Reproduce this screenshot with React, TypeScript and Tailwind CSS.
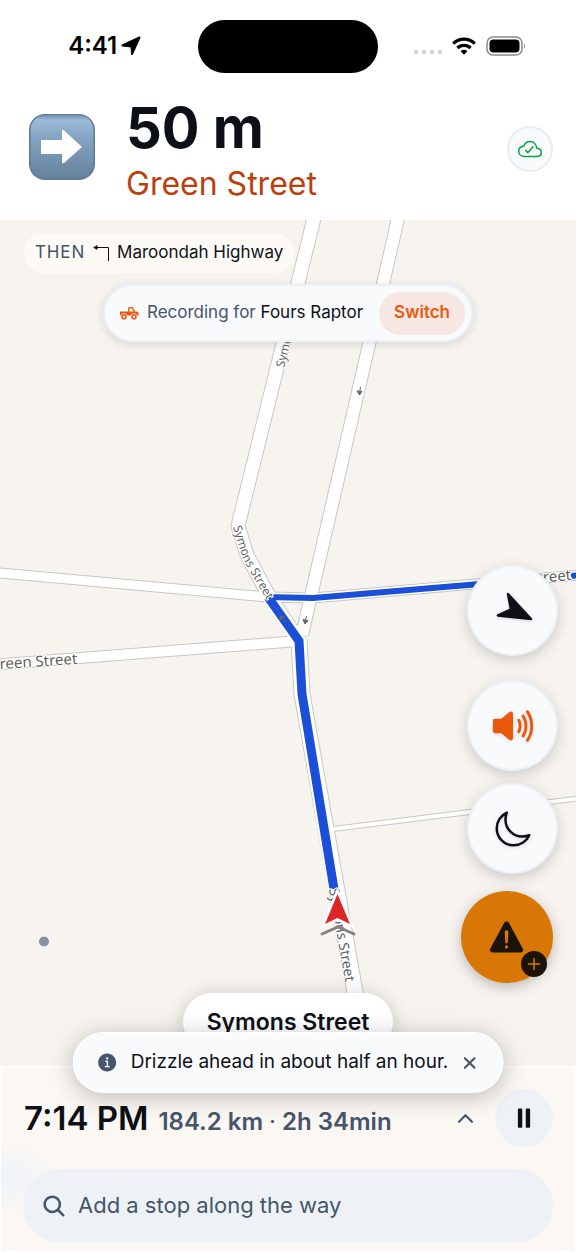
import React from "react";
import {
  IoChevronUp,
  IoClose,
  IoCloudDoneOutline,
  IoInformationCircle,
  IoMoonOutline,
  IoPause,
  IoSearch,
  IoVolumeHigh,
  IoWarning,
} from "react-icons/io5";

interface Road {
  d: string;
  width: number;
}

const roads: Road[] = [
  { d: "M316 210 L238 526 L247 555 L270 598 L300 642", width: 15 },
  { d: "M400 210 L302 635", width: 14 },
  { d: "M-10 572 L268 597 L313 598 L590 574", width: 11 },
  { d: "M-10 665 L299 641", width: 12 },
  { d: "M333 829 L590 797", width: 6 },
  { d: "M299 640 L302 694 L355 992 L372 1080", width: 17 },
];

const MapCanvas = () => (
  <svg
    className="absolute inset-0 h-full w-full"
    viewBox="0 220 576 846"
    preserveAspectRatio="xMidYMid slice"
    aria-hidden="true"
  >
    <defs>
      <path id="symons-top" d="M284 368 L320 222" />
      <path id="symons-mid" d="M233 527 L243 559 L290 640" />
      <path id="symons-low" d="M329 889 L355 1037" />
      <path id="green-left" d="M-11 670 L160 658" />
      <path id="green-right" d="M483 588 L690 569" />
    </defs>
    <rect x="-400" y="0" width="1400" height="1400" fill="#f7f4f0" />
    <g fill="none" strokeLinejoin="round">
      {roads.map((road) => (
        <path key={road.d} d={road.d} stroke="#c9c7c4" strokeWidth={road.width} />
      ))}
      {roads.map((road) => (
        <path key={road.d} d={road.d} stroke="#ffffff" strokeWidth={road.width - 2} />
      ))}
    </g>
    <g fill="none" stroke="#1b4fd8">
      <path d="M335 889 L302 694 L299 641 L270 599" stroke="#ffffff" strokeWidth="14" />
      <path d="M334 889 L302 694 L299 641 L268 597" strokeWidth="9" />
      <path d="M266 597 L313 598 L480 584" strokeWidth="6" />
      <path d="M571 576 L580 575" strokeWidth="6" />
    </g>
    <g stroke="#666666" strokeWidth="1" fill="#666666">
      <path d="M360.500 387 L359.500 394 M357 391 L359.500 395 L362 391.500 Z" />
      <path d="M306.500 616 L305 623 M303 619.500 L305 624 L308 620.500 Z" />
      <path d="M286 622 L281 617 M280 620 L280.500 616 L284 616.500 Z" />
    </g>
    <g
      fill="#5f5f5f"
      stroke="#ffffff"
      strokeWidth="2"
      paintOrder="stroke"
      className="font-['Noto_Sans',sans-serif]"
    >
      <text className="text-[12px]">
        <textPath href="#symons-top">Symons Street</textPath>
      </text>
      <text className="text-[12px]">
        <textPath href="#symons-mid">Symons Street</textPath>
      </text>
      <text className="text-[14px]">
        <textPath href="#symons-low">Symons Street</textPath>
      </text>
      <text className="text-[15px]">
        <textPath href="#green-left">Green Street</textPath>
      </text>
      <text className="text-[15px]">
        <textPath href="#green-right">Green Street</textPath>
      </text>
    </g>
    <path d="M322 934 L338 927 L354 934" fill="none" stroke="#85827f" strokeWidth="3" strokeLinecap="round" />
    <path
      d="M337.500 894 L350 924 L337.500 918 L325 924 Z"
      fill="#dc2626"
      stroke="#ffffff"
      strokeWidth="5"
      paintOrder="stroke"
    />
    <circle cx="44" cy="941.500" r="5.500" fill="#8494a3" stroke="#ffffff" strokeWidth="1" />
  </svg>
);

const StatusBar = () => (
  <div className="grid h-[92px] grid-cols-3 items-center px-4 text-black">
    <div className="flex items-center justify-center gap-1 pr-1">
      <span className="text-2xl font-semibold">4:41</span>
      <svg className="h-5 w-5" viewBox="0 0 20 20" aria-hidden="true">
        <path
          d="M18.500 1.500 L11 18 L10.500 10.500 L1.500 9.500 Z"
          fill="currentColor"
          stroke="currentColor"
          strokeWidth="2"
          strokeLinejoin="round"
        />
      </svg>
    </div>
    <div className="h-[53px] w-[180px] justify-self-center rounded-full bg-black" />
    <div className="flex items-center justify-end gap-2.5 pr-[34px]">
      <div className="flex gap-1 pt-3">
        {[0, 1, 2, 3].map((dot) => (
          <span key={dot} className="h-1 w-1 rounded-[1px] bg-zinc-300" />
        ))}
      </div>
      <svg className="h-[18px] w-6" viewBox="0 0 24 18" aria-hidden="true">
        <g fill="none" stroke="currentColor" strokeWidth="3.200">
          <path d="M1.200 6.600 A15.300 15.300 0 0 1 22.800 6.600" />
          <path d="M5.400 11 A9.400 9.400 0 0 1 18.600 11" />
        </g>
        <path d="M8.600 14.200 A4.900 4.900 0 0 1 15.400 14.200 L12 17.800 Z" fill="currentColor" />
      </svg>
      <svg className="h-5 w-10" viewBox="0 0 40 20" aria-hidden="true">
        <rect x="1" y="1" width="35" height="18" rx="6" fill="none" stroke="#8a8a8a" strokeWidth="1.500" />
        <rect x="3.500" y="3.500" width="30" height="13" rx="4" fill="#000000" />
        <path d="M38 7 Q40 10 38 13 Z" fill="#8a8a8a" />
      </svg>
    </div>
  </div>
);

const TurnRightSign = () => (
  <svg className="h-[68px] w-[68px]" viewBox="0 0 68 68" role="img" aria-label="Turn right">
    <defs>
      <linearGradient id="sign" x1="0" y1="0" x2="0" y2="1">
        <stop offset="0" stopColor="#6f8fae" />
        <stop offset="0.08" stopColor="#9dbbd6" />
        <stop offset="0.35" stopColor="#83a4c3" />
        <stop offset="1" stopColor="#65819b" />
      </linearGradient>
    </defs>
    <rect x="1" y="1" width="66" height="66" rx="16" fill="#5d7b98" />
    <rect x="2.500" y="2" width="63" height="64" rx="15" fill="url(#sign)" />
    <path d="M13 27 H34 V18 Q34 16 36 17.500 L54 34 L36 50 Q34 51 34 49 V41 H13 Z" fill="#ffffff" />
  </svg>
);

const DirectionsHeader = () => (
  <header className="flex h-32 items-start px-6 pr-[23px] pt-2">
    <div className="pl-1 pt-[13px]">
      <TurnRightSign />
    </div>
    <div className="min-w-0 flex-1 pl-[30px]">
      <p className="text-[56px] font-bold leading-[56px] text-[#0d1117]">50 m</p>
      <p className="text-[32px] leading-[56px] text-[#bb3f0c]">Green Street</p>
    </div>
    <button
      type="button"
      aria-label="Saved offline"
      className="mt-[26px] flex h-[46px] w-[46px] items-center justify-center rounded-full border-2 border-slate-200/80 bg-slate-50 text-green-600"
    >
      <IoCloudDoneOutline className="h-6 w-6" />
    </button>
  </header>
);

const PickupIcon = () => (
  <svg className="h-5 w-5 text-[#ea580c]" viewBox="0 0 20 20" aria-hidden="true">
    <path
      d="M1 8.500 H9 V5.500 Q9 4 10.500 4 H13 Q14 4 14.500 5 L16 8.500 H18 Q19.500 8.500 19.500 10 V12.500 H18.300 A3.600 3.600 0 0 0 11.700 12.500 H8.300 A3.600 3.600 0 0 0 1.700 12.500 H1 Z M10.300 8.500 H14.500 L13.200 5.400 H10.300 Z"
      fill="currentColor"
      fillRule="evenodd"
    />
    <circle cx="5" cy="13.700" r="2" fill="none" stroke="currentColor" strokeWidth="1.600" />
    <circle cx="15" cy="13.700" r="2" fill="none" stroke="currentColor" strokeWidth="1.600" />
  </svg>
);

interface MapButtonProps {
  label: string;
  className?: string;
  children: React.ReactNode;
}

const MapButton = ({ label, className = "", children }: MapButtonProps) => (
  <button
    type="button"
    aria-label={label}
    className={`flex h-[91px] w-[91px] items-center justify-center rounded-full border-2 border-slate-200/50 bg-slate-50 text-[#0d1117] shadow-[0_4px_14px_rgba(0,0,0,0.18)] ${className}`}
  >
    {children}
  </button>
);

const MapControls = () => (
  <div className="mt-auto flex flex-col items-end pr-[18px]">
    <MapButton label="Recenter map" className="mb-6">
      <svg className="h-10 w-10 drop-shadow" viewBox="0 0 40 40" aria-hidden="true">
        <path
          d="M38 28 L15 3 L18 18.500 L5 24.500 Z"
          fill="currentColor"
          stroke="currentColor"
          strokeWidth="2.500"
          strokeLinejoin="round"
        />
      </svg>
    </MapButton>
    <MapButton label="Mute voice guidance" className="mb-3">
      <IoVolumeHigh className="h-[46px] w-[46px] text-[#ea580c] drop-shadow" />
    </MapButton>
    <MapButton label="Night mode" className="mb-[17px]">
      <IoMoonOutline className="h-10 w-10 drop-shadow" />
    </MapButton>
    <button
      type="button"
      aria-label="Report a hazard"
      className="relative mr-[5px] flex h-[92px] w-[92px] items-center justify-center rounded-full bg-[#d97706] text-[#1c1408] shadow-[0_4px_14px_rgba(0,0,0,0.25)]"
    >
      <IoWarning className="h-[42px] w-[42px]" />
      <span className="absolute bottom-1.5 right-1.5 flex h-[26px] w-[26px] items-center justify-center rounded-full bg-[#1c1408]">
        <svg className="h-3 w-3" viewBox="0 0 12 12" aria-hidden="true">
          <path d="M6 0 V12 M0 6 H12" stroke="#d97706" strokeWidth="1.500" />
        </svg>
      </span>
    </button>
  </div>
);

const MapPanel = () => (
  <main className="relative flex flex-1 flex-col overflow-hidden bg-[#f7f4f0] pb-[15px] pt-[13px]">
    <MapCanvas />
    <div className="relative flex flex-1 flex-col">
      <div className="ml-6 flex h-10 items-center self-start rounded-full bg-[#fdfaf6] px-[11px] text-[17px]">
        <span className="tracking-wider text-slate-600">THEN</span>
        <svg className="mx-2 h-4 w-4" viewBox="0 0 16 16" aria-hidden="true">
          <path d="M3 2.500 H15.500 V16" fill="none" stroke="#0d1117" />
          <path d="M0 2.500 L4.500 0 V5 Z" fill="#0d1117" />
        </svg>
        <span className="text-[#0d1117]">Maroondah Highway</span>
      </div>
      <div className="mt-[11px] flex h-[58px] items-center self-center rounded-full border-2 border-slate-200/50 bg-slate-50 pl-3.5 pr-1.5 text-[17px] shadow-[0_2px_10px_rgba(0,0,0,0.14)]">
        <PickupIcon />
        <p className="pl-2 pr-4 text-slate-600">
          Recording for <span className="text-[#0d1117]">Fours Raptor</span>
        </p>
        <button
          type="button"
          className="h-[43px] rounded-full bg-[#f7e7e2] px-[15px] font-semibold text-[#ea580c]"
        >
          Switch
        </button>
      </div>
      <MapControls />
      <p className="mt-2.5 flex h-[58px] items-center self-center rounded-full bg-white px-6 text-[23px] font-semibold text-[#0d1117] shadow-[0_2px_20px_rgba(0,0,0,0.2)]">
        Symons Street
      </p>
    </div>
  </main>
);

const WeatherToast = () => (
  <div
    role="status"
    className="absolute -top-[35px] left-1/2 flex h-[61px] -translate-x-1/2 items-center whitespace-nowrap rounded-full border border-white bg-slate-50 px-[22px] text-[#0d1117] shadow-[0_4px_24px_rgba(0,0,0,0.25)]"
  >
    <IoInformationCircle className="h-[23px] w-[23px] text-slate-600" />
    <p className="pl-3 pr-2.5 text-[19px]">Drizzle ahead in about half an hour.</p>
    <button type="button" aria-label="Dismiss" className="text-slate-600">
      <IoClose className="h-[22px] w-[22px]" />
    </button>
  </div>
);

const TripFooter = () => (
  <footer className="relative border border-white bg-[#fbf7f3] bg-[radial-gradient(ellipse_56px_36px_at_0px_110px,#edf3fb,transparent)] px-[22px] pb-[9px] pt-[22px]">
    <WeatherToast />
    <div className="flex items-center">
      <p className="flex flex-1 items-baseline gap-2.5 whitespace-nowrap pl-px font-semibold">
        <span className="text-[33px] leading-10 text-[#0d1117]">7:14 PM</span>
        <span className="text-2xl text-slate-600">
          184.2 km <span className="font-normal">·</span> 2h 34min
        </span>
      </p>
      <button type="button" aria-label="Show trip details" className="px-[18px] py-4 text-slate-600">
        <IoChevronUp className="h-[23px] w-[23px]" />
      </button>
      <button
        type="button"
        aria-label="Pause"
        className="flex h-[58px] w-[58px] items-center justify-center rounded-full bg-[#eef2f6] text-[#0d1117]"
      >
        <IoPause className="h-7 w-7" />
      </button>
    </div>
    <label className="mt-[22px] flex h-[73px] items-center rounded-full bg-[#eef2f6] px-[18px] text-slate-600">
      <IoSearch className="h-[26px] w-[26px] shrink-0" />
      <input
        type="text"
        aria-label="Add a stop"
        placeholder="Add a stop along the way"
        className="min-w-0 flex-1 bg-transparent pl-[11px] text-[22px] outline-none placeholder:text-slate-600"
      />
    </label>
  </footer>
);

export default function App() {
  return (
    <div className="flex min-h-screen flex-col bg-white font-['Inter',sans-serif]">
      <StatusBar />
      <DirectionsHeader />
      <MapPanel />
      <TripFooter />
    </div>
  );
}
